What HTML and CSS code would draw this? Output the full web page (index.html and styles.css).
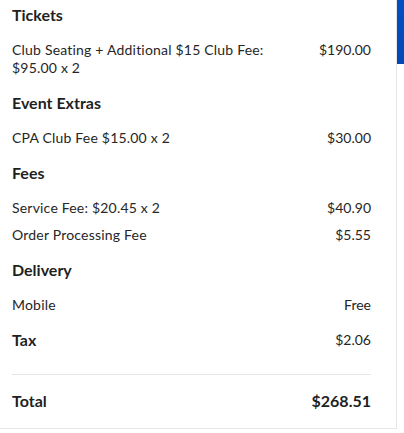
FILE: index.html
```html
<!DOCTYPE html>
<html>
<head>
<meta charset="utf-8">
<link rel="stylesheet" href="styles.css">
</head>
<body>
<div class="frame">
  <div class="panel">
    <section class="group">
      <h2 class="heading">Tickets</h2>
      <div class="row"><span class="label">Club Seating + Additional $15 Club Fee:<br>$95.00 x 2</span><span class="amount">$190.00</span></div>
    </section>
    <section class="group">
      <h2 class="heading">Event Extras</h2>
      <div class="row"><span class="label">CPA Club Fee $15.00 x 2</span><span class="amount">$30.00</span></div>
    </section>
    <section class="group">
      <h2 class="heading">Fees</h2>
      <div class="row"><span class="label">Service Fee: $20.45 x 2</span><span class="amount">$40.90</span></div>
      <div class="row row-tight"><span class="label">Order Processing Fee</span><span class="amount">$5.55</span></div>
    </section>
    <section class="group">
      <h2 class="heading">Delivery</h2>
      <div class="row"><span class="label">Mobile</span><span class="amount">Free</span></div>
    </section>
    <section class="group tax">
      <h2 class="heading">Tax</h2>
      <span class="amount">$2.06</span>
    </section>
    <div class="total">
      <span class="total-label">Total</span>
      <span class="total-amount">$268.51</span>
    </div>
  </div>
  <div class="scrollbar"><div class="thumb"></div></div>
</div>
</body>
</html>
```

FILE: styles.css
```css
* { box-sizing: border-box; }
html, body { margin: 0; padding: 0; background: #fff; }
body {
  font-family: "Lato", "Open Sans", sans-serif;
  color: #262626;
  width: 404px;
  height: 433px;
  overflow: hidden;
}
.frame {
  display: flex;
  width: 404px;
  height: 433px;
}
.panel {
  width: 397px;
  height: 429px;
  border-right: 1px solid #e6e6e6;
  border-bottom: 1px solid #e6e6e6;
  padding: 3px 25px 0 12px;
}
.scrollbar {
  width: 7px;
  height: 433px;
}
.thumb {
  width: 7px;
  height: 64px;
  background: linear-gradient(#024fc2, #0448b5);
}
.group { margin: 0 0 14px 0; }
.heading {
  margin: 0;
  font-size: 16px;
  line-height: 24px;
  font-weight: 700;
  color: #1f1f1f;
}
.row {
  display: flex;
  justify-content: space-between;
  align-items: flex-start;
  margin-top: 14px;
  font-size: 14px;
  line-height: 18px;
  color: #262626;
}
.label { letter-spacing: 0.2px; }
.row-tight { margin-top: 9px; }
.amount { font-size: 14px; line-height: 18px; color: #262626; }
.tax {
  display: flex;
  justify-content: space-between;
  align-items: center;
  margin-bottom: 0;
  padding-bottom: 22px;
  border-bottom: 1px solid #e6e6e6;
}
.total {
  display: flex;
  justify-content: space-between;
  align-items: center;
  height: 54px;
  padding-bottom: 3px;
  font-size: 16px;
  font-weight: 700;
  color: #1f1f1f;
}
```
